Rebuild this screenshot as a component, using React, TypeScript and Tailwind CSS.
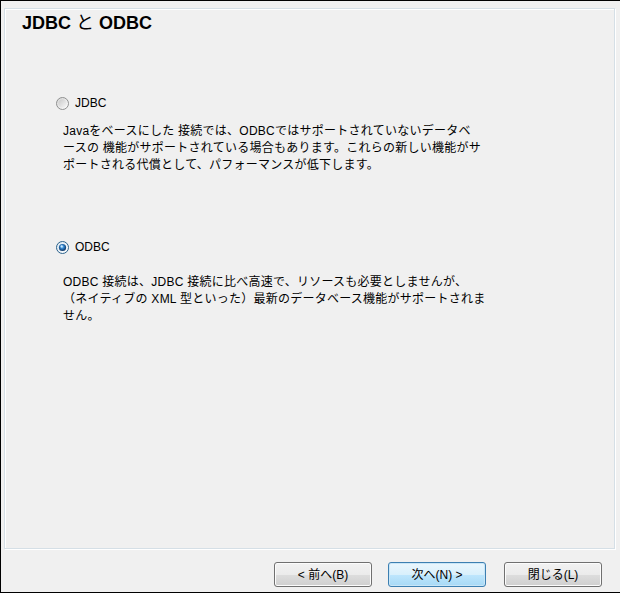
import React from "react";

const bodyFont = {
  fontFamily: '"Liberation Sans", "Noto Sans CJK JP", sans-serif',
};

function Radio({ checked }: { checked: boolean }) {
  return (
    <svg width="13" height="13" viewBox="0 0 13 13" className="shrink-0">
      <defs>
        <linearGradient id={checked ? "rgc" : "rgu"} x1="0" y1="0" x2="1" y2="1">
          <stop offset="0" stopColor={checked ? "#dbe8f3" : "#d6d6d6"} />
          <stop offset="1" stopColor="#ffffff" />
        </linearGradient>
        <linearGradient id="rgin" x1="0" y1="0" x2="1" y2="1">
          <stop offset="0" stopColor="#c9c9c9" />
          <stop offset="1" stopColor="#f7f7f7" />
        </linearGradient>
        <radialGradient id="rgdot" cx="0.45" cy="0.4" r="0.6">
          <stop offset="0" stopColor="#8fd3ff" />
          <stop offset="0.45" stopColor="#2c7cc4" />
          <stop offset="1" stopColor="#0c2f5c" />
        </radialGradient>
      </defs>
      <circle
        cx="6.5"
        cy="6.5"
        r="6"
        fill={checked ? "url(#rgc)" : "url(#rgu)"}
        stroke={checked ? "#2c628b" : "#8e8f8f"}
        strokeWidth="1"
      />
      {checked ? (
        <>
          <circle cx="6.5" cy="6.5" r="3.6" fill="url(#rgdot)" />
          <circle cx="5.6" cy="5.4" r="1.1" fill="#d8f0ff" opacity="0.9" />
        </>
      ) : (
        <circle cx="6.5" cy="6.5" r="4.2" fill="url(#rgin)" />
      )}
    </svg>
  );
}

function Btn({
  children,
  focused,
}: {
  children: React.ReactNode;
  focused?: boolean;
}) {
  return (
    <div
      className={
        "w-[98px] h-[25px] rounded-[3px] border flex items-center justify-center text-[12px] text-black " +
        (focused
          ? "border-[#3c7fb1] bg-[linear-gradient(to_bottom,#eaf6fd_0%,#d9f0fc_50%,#bee6fd_51%,#a7d9f5_100%)] shadow-[inset_0_0_0_1px_#c9e6f7]"
          : "border-[#707070] bg-[linear-gradient(to_bottom,#f2f2f2_0%,#ebebeb_50%,#dddddd_51%,#cfcfcf_100%)] shadow-[inset_0_0_0_1px_#fcfcfc]")
      }
      style={bodyFont}
    >
      {children}
    </div>
  );
}

export default function App() {
  return (
    <div
      className="w-[620px] h-[593px] bg-[#f0f0f0] border-l border-t border-b border-black flex flex-col text-black"
      style={bodyFont}
    >
      <div className="ml-[3px] mt-[7px] mr-[5px] h-[541px] border border-[#d5dfe6] shadow-[1px_1px_0_#ffffff,inset_1px_1px_0_#ffffff] flex flex-col">
        <div className="ml-[17px] mt-[4px] text-[18px] leading-[21px] font-bold">
          JDBC <span className="font-normal">と</span> ODBC
        </div>

        <div className="ml-[51px] mt-[61px] flex items-center gap-[6px] h-[17px]">
          <Radio checked={false} />
          <span className="text-[12px] leading-[17px]">JDBC</span>
        </div>
        <div className="ml-[58px] mt-[11px] text-[12px] leading-[17px] whitespace-nowrap tracking-[0.25px]">
          Javaをベースにした 接続では、ODBCではサポートされていないデータベ
          <br />
          ースの 機能がサポートされている場合もあります。これらの新しい機能がサ
          <br />
          ポートされる代償として、パフォーマンスが低下します。
        </div>

        <div className="ml-[51px] mt-[65px] flex items-center gap-[6px] h-[17px]">
          <Radio checked={true} />
          <span className="text-[12px] leading-[17px]">ODBC</span>
        </div>
        <div className="ml-[58px] mt-[18px] text-[12px] leading-[17px] whitespace-nowrap tracking-[0.25px]">
          ODBC 接続は、JDBC 接続に比べ高速で、リソースも必要としませんが、
          <br />
          （ネイティブの XML 型といった）最新のデータベース機能がサポートされま
          <br />
          せん。
        </div>
      </div>

      <div className="mt-[13px] flex justify-end pr-[18px]">
        <Btn>&lt; 前へ(B)</Btn>
        <div className="w-[16px]" />
        <Btn focused>次へ(N) &gt;</Btn>
        <div className="w-[18px]" />
        <Btn>閉じる(L)</Btn>
      </div>
    </div>
  );
}
